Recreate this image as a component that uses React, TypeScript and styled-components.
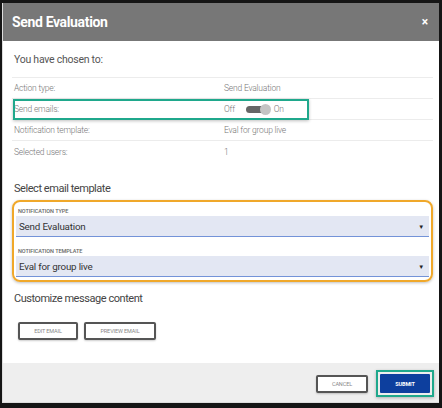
import * as React from 'react';
import styled, { createGlobalStyle } from 'styled-components';

const GlobalStyle = createGlobalStyle`
  html, body {
    margin: 0;
    padding: 0;
    background: #111;
  }
  body {
    font-family: Roboto, "Liberation Sans", Arial, sans-serif;
  }
`;

const Frame = styled.div`
  width: 442px;
  height: 408px;
  box-sizing: border-box;
  padding: 3px 3px 5px 2px;
  background: #151515;
`;

const Dialog = styled.div`
  height: 100%;
  display: flex;
  flex-direction: column;
  background: #fff;
  border-left: 1px solid #ddd;
  border-bottom: 1px solid #ddd;
  box-sizing: border-box;
`;

const Header = styled.div`
  height: 38px;
  flex: none;
  display: flex;
  align-items: center;
  justify-content: space-between;
  padding: 0 11px 0 9px;
  background: #777777;
  color: #fff;
`;

const Title = styled.h2`
  margin: 0;
  font-size: 14px;
  font-weight: 700;
  letter-spacing: -0.35px;
`;

const CloseButton = styled.span`
  font-size: 12px;
  font-weight: 700;
  line-height: 1;
`;

const Body = styled.div`
  flex: 1;
  padding: 11px 6px 0 9px;
`;

const Intro = styled.div`
  font-size: 10.5px;
  line-height: 16px;
  letter-spacing: -0.25px;
  color: #555;
  padding-left: 2px;
  margin-bottom: 9px;
`;

const Summary = styled.div`
  border-top: 1px solid #ececec;
`;

const Row = styled.div<{ $highlight?: boolean; $last?: boolean }>`
  position: relative;
  display: grid;
  grid-template-columns: 210px 1fr;
  align-items: center;
  height: 21px;
  box-sizing: border-box;
  padding-left: 2px;
  border-bottom: ${(p) => (p.$last ? 'none' : '1px solid #ececec')};
  font-size: 8.5px;
  letter-spacing: -0.2px;
  font-weight: 300;
  color: #777;

  ${(p) =>
    p.$highlight &&
    `
    &::after {
      content: '';
      position: absolute;
      left: 1px;
      top: 0px;
      width: 296px;
      height: 21px;
      box-sizing: border-box;
      border: 2px solid #1fa88c;
      box-shadow: 0 1px 3px rgba(0, 0, 0, 0.25);
      pointer-events: none;
    }
  `}
`;

const Value = styled.div`
  display: flex;
  align-items: center;
`;

const Track = styled.span`
  position: relative;
  display: inline-block;
  width: 23px;
  height: 7px;
  border-radius: 4px;
  background: #666;
  margin: 0 5px 0 11px;
`;

const Knob = styled.span`
  position: absolute;
  right: -2px;
  top: -2px;
  width: 11px;
  height: 11px;
  border-radius: 50%;
  background: #c4c4c4;
`;

const SectionTitle = styled.h3<{ $top: number }>`
  margin: ${(p) => p.$top}px 0 0;
  padding-left: 2px;
  font-size: 11px;
  line-height: 17px;
  letter-spacing: -0.45px;
  font-weight: 400;
  color: #444;
`;

const TemplateBox = styled.div`
  margin-top: 3px;
  border: 2px solid #f0a82a;
  border-radius: 8px;
  box-shadow: 0 1px 3px rgba(0, 0, 0, 0.25);
  padding: 5px 2px 3px 2px;
`;

const FieldLabel = styled.div<{ $top?: number }>`
  margin-top: ${(p) => p.$top ?? 0}px;
  padding-left: 2px;
  font-size: 5.5px;
  line-height: 8px;
  font-weight: 500;
  color: #666;
  text-transform: uppercase;
  letter-spacing: -0.05px;
`;

const Select = styled.div`
  margin-top: 1px;
  height: 21px;
  box-sizing: border-box;
  display: flex;
  align-items: center;
  justify-content: space-between;
  padding: 0 5px 0 3px;
  background: #e3e7f3;
  border-bottom: 1px solid #7393d8;
  font-size: 9.8px;
  letter-spacing: -0.2px;
  color: #333;
`;

const Caret = styled.span`
  font-size: 6px;
  color: #222;
`;

const ButtonRow = styled.div`
  display: flex;
  gap: 6px;
  margin: 15px 0 0 6px;
`;

const OutlineButton = styled.button<{ $width: number }>`
  width: ${(p) => p.$width}px;
  height: 18px;
  box-sizing: border-box;
  border: 2px solid #555;
  border-radius: 2px;
  background: #fff;
  font-family: inherit;
  font-size: 5.5px;
  letter-spacing: -0.1px;
  color: #888;
  text-transform: uppercase;
  padding: 0;
  box-shadow: 0 1px 2px rgba(0, 0, 0, 0.2);
`;

const Footer = styled.div`
  flex: none;
  height: 39px;
  box-sizing: border-box;
  display: flex;
  align-items: center;
  justify-content: flex-end;
  gap: 8px;
  padding: 2px 5px 0 0;
  background: #eeeeee;
`;

const Highlight = styled.span`
  display: inline-flex;
  padding: 2px;
  border: 2px solid #1fa88c;
  box-shadow: 0 1px 3px rgba(0, 0, 0, 0.25);
`;

const PrimaryButton = styled.button`
  width: 50px;
  height: 19px;
  border: none;
  border-radius: 1px;
  background: #0d3f9e;
  color: #fff;
  font-family: inherit;
  font-size: 5.5px;
  font-weight: 700;
  letter-spacing: -0.1px;
  padding: 0;
`;

const rows = [
  { label: 'Action type:', value: 'Send Evaluation' },
  { label: 'Send emails:', value: null },
  { label: 'Notification template:', value: 'Eval for group live' },
  { label: 'Selected users:', value: '1' },
];

export default function App() {
  return (
    <>
      <GlobalStyle />
      <Frame>
        <Dialog>
          <Header>
            <Title>Send Evaluation</Title>
            <CloseButton>×</CloseButton>
          </Header>
          <Body>
            <Intro>You have chosen to:</Intro>
            <Summary>
              {rows.map((r, i) => (
                <Row key={r.label} $highlight={r.value === null} $last={i === rows.length - 1}>
                  <div>{r.label}</div>
                  <Value>
                    {r.value === null ? (
                      <>
                        Off
                        <Track>
                          <Knob />
                        </Track>
                        On
                      </>
                    ) : (
                      r.value
                    )}
                  </Value>
                </Row>
              ))}
            </Summary>

            <SectionTitle $top={18}>Select email template</SectionTitle>
            <TemplateBox>
              <FieldLabel>Notification type</FieldLabel>
              <Select>
                Send Evaluation
                <Caret>▼</Caret>
              </Select>
              <FieldLabel $top={10}>Notification template</FieldLabel>
              <Select>
                Eval for group live
                <Caret>▼</Caret>
              </Select>
            </TemplateBox>

            <SectionTitle $top={8}>Customize message content</SectionTitle>
            <ButtonRow>
              <OutlineButton $width={60}>Edit email</OutlineButton>
              <OutlineButton $width={72}>Preview email</OutlineButton>
            </ButtonRow>
          </Body>
          <Footer>
            <OutlineButton $width={52}>Cancel</OutlineButton>
            <Highlight>
              <PrimaryButton>SUBMIT</PrimaryButton>
            </Highlight>
          </Footer>
        </Dialog>
      </Frame>
    </>
  );
}
